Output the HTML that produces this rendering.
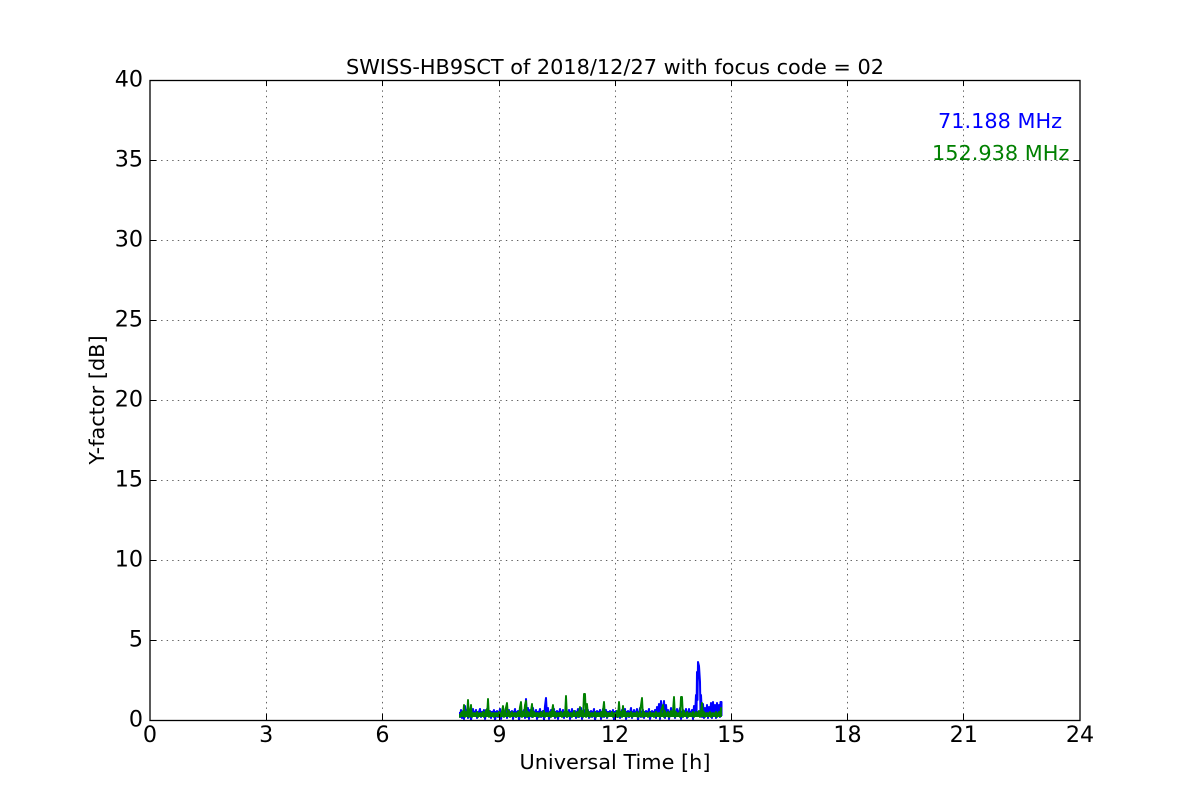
<!DOCTYPE html>
<html>
<head>
<meta charset="utf-8">
<style>
html,body{margin:0;padding:0;background:#fff;width:1200px;height:800px;overflow:hidden}
svg{display:block}
text{font-family:"DejaVu Sans","Liberation Sans",sans-serif;fill:#000}
.t{font-size:22.22px}
.l{font-size:20.83px}
</style>
</head>
<body>
<svg width="1200" height="800" viewBox="0 0 1200 800" xmlns="http://www.w3.org/2000/svg">
<rect width="1200" height="800" fill="#fff"/>
<g stroke="#000" stroke-width="1" stroke-dasharray="1.39,4.17" fill="none" opacity=".62">
<path d="M266.5 720V80M382.5 720V80M499.5 720V80M615.5 720V80M731.5 720V80M847.5 720V80M963.5 720V80"/>
<path d="M150 160.5H1080M150 240.5H1080M150 320.5H1080M150 400.5H1080M150 480.5H1080M150 560.5H1080M150 640.5H1080"/>
</g>
<rect x="460" y="711" width="261" height="5" fill="#0000ff"/>
<polyline fill="none" stroke="#0000ff" stroke-width="2" stroke-linejoin="round" points="460,712 460,717 461,710 462,718 463,711 464,719 465,706 466,716 467,710 468,718 470,711 471,720 473,709 474,716 476,710 477,718 480,709 481,717 484,710 485,719 487,709 488,716 490,711 491,718 494,710 495,720 497,711 498,717 500,709 501,719 503,710 504,716 506,708 507,718 509,710 510,716 512,711 513,719 515,709 516,717 518,711 519,720 521,709 522,716 524,710 525,718 526,699 527,717 528,708 529,719 530,710 532,717 533,708 534,716 536,710 537,719 540,709 541,717 543,711 544,720 545,706 546,698 547,716 548,708 549,719 551,710 552,716 554,709 555,718 557,711 558,719 560,709 561,716 563,710 564,718 566,708 567,717 569,710 570,719 572,709 573,716 575,711 576,718 578,709 579,717 581,708 582,719 584,710 585,716 588,710 589,718 591,711 592,717 594,709 595,720 597,711 598,716 600,710 601,719 603,709 604,717 606,710 607,718 610,711 611,716 613,710 614,720 616,711 617,717 619,708 620,718 622,710 623,716 625,709 626,719 628,711 629,717 631,708 632,718 634,710 635,716 637,709 638,720 640,708 641,717 643,710 644,718 646,711 647,716 649,709 650,719 652,711 653,716 655,710 656,718 657,707 658,716 659,704 660,719 661,701 662,716 664,701 665,718 666,705 667,716 668,710 669,719 671,708 672,716 674,710 675,718 677,709 678,716 680,708 681,719 683,710 684,716 686,709 687,718 689,709 690,716 692,710 693,719 694,706 695,716 696,695 696.5,716 697,672 697.5,700 698,662 699,666 700,682 700.5,714 701,695 702,717 703,704 704,718 705,708 706,716 707,705 708,718 709,707 710,716 711,703 712,718 713,702 714,716 715,705 716,718 717,703 718,716 719,705 720,717 720.5,702 721.5,702 721.5,716"/>
<rect x="460" y="712.5" width="261" height="4.5" fill="#008000"/>
<polyline fill="none" stroke="#008000" stroke-width="1.9" stroke-linejoin="round" points="460,714 460,717 462,712 463,716 464,705 465,717 466,712 467,716 468,700 469,717 470,712 471,705 472,717 474,713 475,716 477,712 478,717 480,713 481,716 483,712 484,717 486,710 487,716 488,699 489,717 490,712 491,716 493,713 494,717 496,713 497,716 499,712 500,717 502,711 503,706 504,717 505,712 507,703 508,716 509,711 510,717 512,712 513,716 515,713 516,717 518,712 519,716 520,707 521,702 522,717 523,712 524,716 525,705 526,701 527,717 528,712 529,716 531,711 532,704 533,717 534,712 536,716 537,713 539,717 541,712 542,716 544,711 545,717 547,713 548,716 550,712 551,717 553,705 554,716 555,712 556,717 558,713 559,716 561,712 562,717 564,712 565,716 566,696 567,717 568,712 569,716 571,713 572,717 574,711 575,716 577,712 578,717 580,707 581,716 582,711 583,717 584,694 585,694 586,717 587,704 588,716 589,712 590,717 592,713 593,716 595,712 596,717 598,713 599,716 601,712 602,717 603,711 604,702 605,716 606,712 607,717 609,713 610,716 612,712 613,717 615,713 616,716 617,711 618,717 619,702 620,716 621,712 622,717 623,706 624,716 625,711 626,717 628,713 629,716 631,712 632,717 634,713 635,716 637,712 638,717 640,712 641,705 642,698 643,717 644,712 645,716 647,713 648,717 650,712 651,716 653,713 654,717 656,712 657,716 659,713 660,717 661,711 663,705 664,717 665,711 666,716 668,712 669,717 671,711 672,716 673,711 674,697 675,717 676,712 677,716 679,713 680,717 681,697 682,697 683,717 684,711 685,716 687,712 688,717 690,713 691,716 693,712 694,717 696,712 697,716 699,711 700,717 701,711 702,703 703,716 704,712 705,717 707,713 708,716 710,712 711,717 713,713 714,716 716,712 717,717 719,712 720,716 721,708 721,717"/>
<rect x="150" y="80.5" width="930" height="640" fill="none" stroke="#000" stroke-width="1.3"/>
<g stroke="#000" stroke-width="1" fill="none">
<path d="M266.5 80v6M382.5 80v6M499.5 80v6M615.5 80v6M731.5 80v6M847.5 80v6M963.5 80v6M266.5 720v-6M382.5 720v-6M499.5 720v-6M615.5 720v-6M731.5 720v-6M847.5 720v-6M963.5 720v-6"/>
<path d="M150 160.5h6M150 240.5h6M150 320.5h6M150 400.5h6M150 480.5h6M150 560.5h6M150 640.5h6M1080 160.5h-6M1080 240.5h-6M1080 320.5h-6M1080 400.5h-6M1080 480.5h-6M1080 560.5h-6M1080 640.5h-6"/>
</g>
<text x="615" y="74" text-anchor="middle" class="l">SWISS-HB9SCT of 2018/12/27 with focus code = 02</text>
<g class="t" text-anchor="end">
<text x="143" y="86.5">40</text>
<text x="143" y="166.5">35</text>
<text x="143" y="246.5">30</text>
<text x="143" y="326.5">25</text>
<text x="143" y="406.5">20</text>
<text x="143" y="486.5">15</text>
<text x="143" y="566.5">10</text>
<text x="143" y="646.5">5</text>
<text x="143" y="726.5">0</text>
</g>
<g class="t" text-anchor="middle">
<text x="150" y="742">0</text>
<text x="266.25" y="742">3</text>
<text x="382.5" y="742">6</text>
<text x="499.5" y="742">9</text>
<text x="615" y="742">12</text>
<text x="731.25" y="742">15</text>
<text x="847.5" y="742">18</text>
<text x="963.75" y="742">21</text>
<text x="1080" y="742">24</text>
</g>
<text x="615" y="769" text-anchor="middle" class="l">Universal Time [h]</text>
<text transform="translate(104 400) rotate(-90)" text-anchor="middle" class="l">Y-factor [dB]</text>
<text x="938" y="128" class="l" style="fill:#0000ff">71.188 MHz</text>
<text x="932" y="160" class="l" style="fill:#008000">152.938 MHz</text>
</svg>
</body>
</html>
